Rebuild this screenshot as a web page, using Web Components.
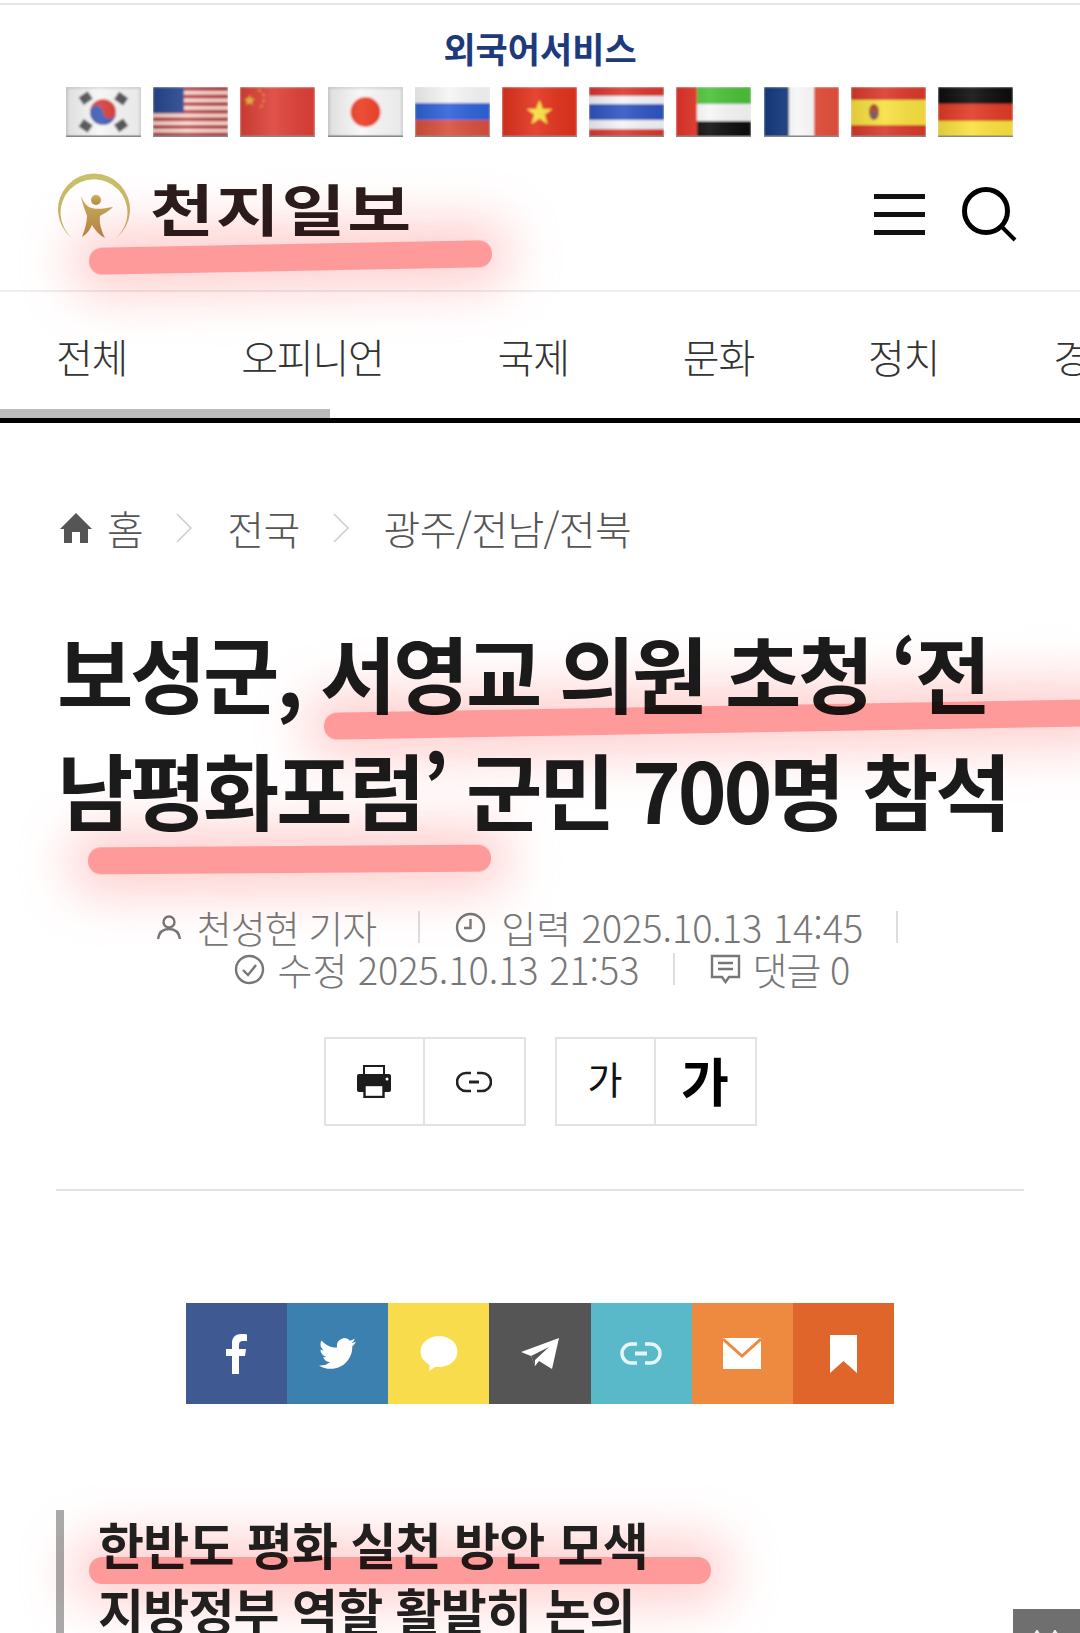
<!DOCTYPE html>
<html lang="ko">
<head>
<meta charset="utf-8">
<title>천지일보</title>
<style>
    html, body { margin: 0; padding: 0; background: #fff; }
    body { width: 1080px; height: 1633px; overflow: hidden; font-family: "Noto Sans CJK KR", "Noto Sans", sans-serif; }
</style>
</head>
<body>
<foreign-bar></foreign-bar>
<site-head></site-head>
<section-nav></section-nav>
<bread-crumbs></bread-crumbs>
<article-title></article-title>
<article-meta></article-meta>
<article-tools></article-tools>
<share-bar></share-bar>
<sub-head></sub-head>
<top-button></top-button>
<script>
const FLAGS = {
    kr: `<rect width="75" height="50" fill="#f6f6f6"/><rect x=".5" y=".5" width="74" height="49" fill="none" stroke="#ccc" stroke-width="2"/><circle cx="37" cy="25" r="13" fill="#d83a35"/><path d="M24 25a6.500 6.500 0 0 1 13 0a6.500 6.500 0 0 0 13 0a13 13 0 0 1-26 0z" fill="#3a5cb5"/><g fill="#555"><rect x="14" y="7" width="11" height="9" transform="rotate(-35 19 11)"/><rect x="50" y="7" width="11" height="9" transform="rotate(35 55 11)"/><rect x="14" y="34" width="11" height="9" transform="rotate(35 19 39)"/><rect x="50" y="34" width="11" height="9" transform="rotate(-35 55 39)"/></g>`,
    us: `<rect width="75" height="50" fill="#f8d8d2"/><g fill="#b8403c"><rect width="75" height="4"/><rect y="7.600" width="75" height="3.800"/><rect y="15.200" width="75" height="3.800"/><rect y="22.800" width="75" height="3.800"/><rect y="30.400" width="75" height="3.800"/><rect y="38" width="75" height="3.800"/><rect y="45.600" width="75" height="4.400"/></g><rect width="31" height="26" fill="#27478f"/>`,
    cn: `<rect width="75" height="50" fill="#dd4037"/><path d="M9.500 8l1.600 3.600 3.900.2-3 2.500 1 3.700-3.500-2.100-3.500 2.100 1-3.700-3-2.500 3.900-.2z" fill="#f2b83c"/><path d="M18 3c4 1 6 4 6 8s-1 7-4 10" fill="none" stroke="#e8943a" stroke-width="1.500" stroke-dasharray="3 3"/>`,
    jp: `<rect width="75" height="50" fill="#f7f7f7"/><rect x=".5" y=".5" width="74" height="49" fill="none" stroke="#ccc" stroke-width="2"/><circle cx="37.500" cy="25" r="15" fill="#ea3a22"/>`,
    ru: `<rect width="75" height="50" fill="#f5f5f5"/><rect y="16" width="75" height="17" fill="#2f62d8"/><rect y="33" width="75" height="17" fill="#d8503a"/>`,
    vn: `<rect width="75" height="50" fill="#e1301f"/><path d="M37.500 13l3.400 9h9.600l-7.700 5.800 2.900 9.400-8.200-5.700-8.200 5.700 2.900-9.400-7.700-5.800h9.600z" fill="#f6dc3c"/>`,
    th: `<rect width="75" height="50" fill="#d8392f"/><rect y="9" width="75" height="33" fill="#f3f3f8"/><rect y="17" width="75" height="16" fill="#2d55c0"/>`,
    ae: `<rect width="75" height="50" fill="#f6f6f6"/><rect x="21" width="54" height="17" fill="#4bbf38"/><rect x="21" y="34" width="54" height="16" fill="#111"/><rect width="21" height="50" fill="#e5342a"/>`,
    fr: `<rect width="75" height="50" fill="#f6f6f6"/><rect width="25" height="50" fill="#173a80"/><rect x="50" width="25" height="50" fill="#e3503a"/>`,
    es: `<rect width="75" height="50" fill="#d9382b"/><rect y="13" width="75" height="25" fill="#f7e03f"/><ellipse cx="23" cy="25" rx="5" ry="8" fill="#a8452f"/><rect x="20" y="25" width="6" height="6" fill="#6a5a60"/>`,
    de: `<rect width="75" height="17" fill="#0c0c0c"/><rect y="17" width="75" height="17" fill="#df3a25"/><rect y="34" width="75" height="16" fill="#f8e13c"/>`
};

class ForeignBar extends HTMLElement {
    constructor() {
        super();
        this.attachShadow({ mode: 'open' });
        const flags = Object.keys(FLAGS).map(k =>
            `<svg viewBox="0 0 75 50" width="75" height="50"><g filter="url(#soft)">${FLAGS[k]}</g><rect width="75" height="50" fill="url(#gloss)"/><rect y="48.500" width="75" height="1.500" fill="#888"/></svg>`
        ).join('');
        this.shadowRoot.innerHTML = `
        <style>
            :host { display: block; border-top: 2px solid #e6e9eb; margin-top: 3px; }
            h2 { margin: 0; padding-top: 20px; height: 62px; text-align: center; font: 700 35px/46px "Noto Sans CJK KR", sans-serif; color: #1c3a7c; }
            .flags { display: flex; justify-content: space-between; padding: 0 67px 0 66px; }
            svg { display: block; }
        </style>
        <svg width="0" height="0" style="position:absolute">
            <filter id="soft" x="-5%" y="-5%" width="110%" height="110%"><feGaussianBlur stdDeviation="0.9"/></filter>
            <linearGradient id="gloss" x1="0" y1="0" x2="1" y2="0"><stop offset="0" stop-color="#000" stop-opacity=".1"/><stop offset=".45" stop-color="#fff" stop-opacity=".1"/><stop offset="1" stop-color="#000" stop-opacity=".05"/></linearGradient>
        </svg>
        <h2>외국어서비스</h2>
        <div class="flags">${flags}</div>`;
    }
}

class SiteHead extends HTMLElement {
    constructor() {
        super();
        this.attachShadow({ mode: 'open' });
        this.shadowRoot.innerHTML = `
        <style>
            :host { display: block; position: relative; height: 155px; border-bottom: 2px solid #eee; box-sizing: border-box; }
            .row { display: flex; align-items: center; height: 140px; padding: 0 63px 0 57px; }
            .logo { display: flex; align-items: center; gap: 19px; }
            .name { display: inline-block; transform: scaleX(1.24); transform-origin: left center; font: 700 56px/70px "Noto Sans CJK KR", sans-serif; letter-spacing: 1.500px; color: #2c1c1c; }
            .icons { margin-left: auto; display: flex; align-items: center; gap: 36px; margin-top: 16px; }
            svg { display: block; }
            x-marker { left: 89px; top: 107px; width: 403px; }
        </style>
        <div class="row">
            <div class="logo">
                <svg width="74" height="70" viewBox="0 0 74 70">
                    <defs>
                        <linearGradient id="ring" x1="0" y1="0" x2="0" y2="1"><stop offset="0" stop-color="#c9c26a"/><stop offset="1" stop-color="#c4ab62"/></linearGradient>
                        <linearGradient id="man" x1="0" y1="0" x2="0" y2="1"><stop offset="0" stop-color="#c7b45a"/><stop offset="1" stop-color="#b58a4a"/></linearGradient>
                    </defs>
                    <path d="M15 66A36 36 0 1 1 59 66A33.500 33.500 0 1 0 15 66z" fill="url(#ring)"/>
                    <circle cx="39" cy="28" r="5" fill="url(#man)"/>
                    <path d="M24 24C27 31 30 35 35 36C41 38 49 36 56 35C51 40 46 42 43 44C42 50 44 58 48 66C42 63 38 58 35 53C33 58 30 62 25 65C28 57 30 50 30 44C28 38 25 31 24 24z" fill="url(#man)"/>
                </svg>
                <span class="name">천지일보</span>
            </div>
            <div class="icons">
                <svg width="51" height="42" viewBox="0 0 51 42" fill="#111"><rect width="51" height="5" y="0"/><rect width="51" height="5" y="18"/><rect width="51" height="5" y="36"/></svg>
                <svg width="56" height="56" viewBox="0 0 56 56" fill="none" stroke="#000"><circle cx="25" cy="24" r="21.500" stroke-width="5"/><path d="M41 40l13 13" stroke-width="4"/></svg>
            </div>
        </div>
        <x-marker tilt="-1.1"></x-marker>`;
    }
}

// the pink marker pen strokes over the screenshot
class XMarker extends HTMLElement {
    constructor() {
        super();
        this.attachShadow({ mode: 'open' });
        this.shadowRoot.innerHTML = `
        <style>
            :host { display: block; position: absolute; height: 27px; mix-blend-mode: multiply; pointer-events: none; z-index: 5; }
            div { width: 100%; height: 100%; border-radius: 13px; background: #ff9a9a; box-shadow: 0 0 50px 20px rgba(255, 150, 150, .45); }
        </style>
        <div></div>`;
    }
    connectedCallback() {
        this.style.transform = `rotate(${this.getAttribute('tilt') || 0}deg)`;
    }
}

class SectionNav extends HTMLElement {
    constructor() {
        super();
        this.attachShadow({ mode: 'open' });
        const items = ['전체', '오피니언', '국제', '문화', '정치', '경제'];
        this.shadowRoot.innerHTML = `
        <style>
            :host { display: block; position: relative; height: 126px; overflow: hidden; border-bottom: 5px solid #000; box-sizing: content-box; }
            ul { display: flex; gap: 114px; margin: 0; padding: 38px 0 0 56px; list-style: none; white-space: nowrap; font: 300 40px/52px "Noto Sans CJK KR", sans-serif; letter-spacing: -1.200px; color: #333; }
            .thumb { position: absolute; left: 0; bottom: 0; width: 330px; height: 9px; background: #bcbcbc; }
        </style>
        <ul>${items.map(i => `<li>${i}</li>`).join('')}</ul>
        <div class="thumb"></div>`;
    }
}

class BreadCrumbs extends HTMLElement {
    constructor() {
        super();
        this.attachShadow({ mode: 'open' });
        const chevron = `<svg width="16" height="30" viewBox="0 0 16 30" fill="none" stroke="#ccc" stroke-width="1.500"><path d="M1 1l14 14-14 14"/></svg>`;
        this.shadowRoot.innerHTML = `
        <style>
            :host { display: flex; align-items: center; height: 50px; margin-top: 80px; padding-left: 60px; font: 300 40px/50px "Noto Sans CJK KR", sans-serif; letter-spacing: -.6px; color: #555; }
            svg { display: block; flex: none; }
            .home { margin-right: 15px; }
            .c { margin: 0 35px 0 33px; }
        </style>
        <svg class="home" width="32" height="30" viewBox="0 0 32 30" fill="#555"><path d="M16 0L0 16h4v14h8V19h8v11h8V16h4z"/></svg>
        <span>홈</span><span class="c">${chevron}</span>
        <span>전국</span><span class="c">${chevron}</span>
        <span>광주/전남/전북</span>`;
    }
}

class ArticleTitle extends HTMLElement {
    constructor() {
        super();
        this.attachShadow({ mode: 'open' });
        this.shadowRoot.innerHTML = `
        <style>
            :host { display: block; position: relative; margin-top: 60px; padding-left: 57px; }
            h1 { margin: 0; font: 700 83px/117px "Noto Sans CJK KR", sans-serif; letter-spacing: -3.300px; color: #1b1b1b; white-space: nowrap; }
            .m1 { left: 324px; top: 93px; width: 780px; }
            .m2 { left: 88px; top: 233px; width: 403px; }
        </style>
        <h1>보성군, 서영교 의원 초청 ‘전<br>남평화포럼’ 군민 700명 참석</h1>
        <x-marker class="m1" tilt="-1"></x-marker>
        <x-marker class="m2" tilt="-.4"></x-marker>`;
    }
}

class ArticleMeta extends HTMLElement {
    constructor() {
        super();
        this.attachShadow({ mode: 'open' });
        const ic = 'fill="none" stroke="#777" stroke-width="2.400"';
        this.shadowRoot.innerHTML = `
        <style>
            :host { display: block; margin-top: 59px; font: 300 38px/42px "Noto Sans CJK KR", sans-serif; letter-spacing: -.1px; color: #777; }
            .row { display: flex; justify-content: center; align-items: center; height: 42px; }
            svg { display: block; flex: none; margin-right: 15px; }
            i { display: block; width: 2px; height: 32px; background: #ddd; margin: 0 35px 0 42px; }
            .row + .row { padding-left: 3px; }
            .row + .row i { margin-left: 33px; }
            .tail { margin-right: 26px; margin-left: 33px; }
            .tight { letter-spacing: -1px; }
            .cmt { margin-right: 12px; }
        </style>
        <div class="row">
            <svg width="26" height="26" viewBox="0 0 26 26" ${ic}><circle cx="13" cy="8" r="5.500"/><path d="M2 25c1-7 5-10 11-10s10 3 11 10"/></svg>
            <span class="tight">천성현 기자</span><i></i>
            <svg width="31" height="31" viewBox="0 0 31 31" ${ic}><circle cx="15.500" cy="15.500" r="13.500"/><path d="M15.500 7v9H9"/></svg>
            <span>입력 2025.10.13 14:45</span><i class="tail"></i>
        </div>
        <div class="row">
            <svg width="31" height="31" viewBox="0 0 31 31" ${ic} style="margin-right:13px"><circle cx="15.500" cy="15.500" r="13.500"/><path d="M9 16l5 5 8-10"/></svg>
            <span>수정 2025.10.13 21:53</span><i></i>
            <svg class="cmt" width="31" height="30" viewBox="0 0 31 30" ${ic}><path d="M2 2h27v21H19l-3.500 5-3.500-5H2z"/><path d="M8 9h15M8 15h15"/></svg>
            <span class="tight">댓글 0</span>
        </div>`;
    }
}

class ToolBox extends HTMLElement {
    constructor() {
        super();
        this.attachShadow({ mode: 'open' });
        this.shadowRoot.innerHTML = `
        <style>
            :host { display: flex; border: 2px solid #e2e2e2; height: 89px; box-sizing: border-box; }
            ::slotted(*) { display: flex; align-items: center; justify-content: center; width: 99px; box-sizing: border-box; }
            ::slotted(:first-child) { border-right: 2px solid #e2e2e2; }
        </style>
        <slot></slot>`;
    }
}

class ArticleTools extends HTMLElement {
    constructor() {
        super();
        this.attachShadow({ mode: 'open' });
        this.shadowRoot.innerHTML = `
        <style>
            :host { display: block; margin-top: 47px; }
            .wrap { display: flex; justify-content: center; gap: 29px; padding-bottom: 63px; }
            hr { margin: 0 56px; border: 0; height: 2px; background: #e3e3e3; }
            .s { font: 400 38px/1 "Noto Sans CJK KR", sans-serif; color: #111; padding-bottom: 8px; }
            .b { font: 700 52px/1 "Noto Sans CJK KR", sans-serif; color: #000; padding-bottom: 4px; }
        </style>
        <div class="wrap">
            <tool-box>
                <div><svg width="34" height="33" viewBox="0 0 34 33"><rect x="7" y="1" width="20" height="12" fill="#fff" stroke="#1c1c1c" stroke-width="2"/><rect y="9" width="34" height="18" rx="2" fill="#1c1c1c"/><rect x="7.500" y="20" width="19" height="12" fill="#fff" stroke="#1c1c1c" stroke-width="2.400"/><circle cx="30" cy="14" r="1.500" fill="#fff"/></svg></div>
                <div><svg width="36" height="22" viewBox="0 0 36 22" fill="none" stroke="#222" stroke-width="2.600"><path d="M15 2H10a9 9 0 0 0 0 18h5M21 2h5a9 9 0 0 1 0 18h-5"/><path d="M13 11h10" stroke-width="3"/></svg></div>
            </tool-box>
            <tool-box>
                <div class="s">가</div>
                <div class="b">가</div>
            </tool-box>
        </div>
        <hr>`;
    }
}

class ShareBar extends HTMLElement {
    constructor() {
        super();
        this.attachShadow({ mode: 'open' });
        this.shadowRoot.innerHTML = `
        <style>
            :host { display: flex; width: 708px; height: 101px; margin: 112px auto 0; }
            div { flex: 1; display: flex; align-items: center; justify-content: center; }
            svg { display: block; }
        </style>
        <div style="background:#3f5a93"><svg width="24" height="40" viewBox="0 0 24 40" fill="#fff"><path d="M7 40V22H1v-7h6V9c0-6 4-9 9-9 2 0 5 .200 6 .400V7h-4c-3 0-4 1.500-4 4v4h7l-1 7h-6v18z"/></svg></div>
        <div style="background:#3b80ae"><svg width="37" height="32" viewBox="0 0 24 21" preserveAspectRatio="none" fill="#fff"><path d="M23.950 2.500a10 10 0 0 1-2.820.770 4.960 4.960 0 0 0 2.160-2.720c-.950.560-2 .960-3.130 1.180a4.920 4.920 0 0 0-8.380 4.490C7.690 6.500 4.070 4.500 1.640 1.600a4.820 4.820 0 0 0-.670 2.470c0 1.710.870 3.210 2.190 4.100a4.900 4.900 0 0 1-2.230-.620v.060a4.920 4.920 0 0 0 3.950 4.830 5 5 0 0 1-2.210.080 4.940 4.940 0 0 0 4.600 3.420 9.870 9.870 0 0 1-6.100 2.100c-.390 0-.780-.020-1.170-.060a14 14 0 0 0 7.560 2.200c9.050 0 14-7.490 14-13.980 0-.210 0-.420-.020-.630A9.940 9.940 0 0 0 24 2.500z"/></svg></div>
        <div style="background:#f9dc4b"><svg width="38" height="36" viewBox="0 0 38 36"><ellipse cx="19" cy="15.500" rx="18.500" ry="15.500" fill="#fff"/><path d="M10 26l-1 9 9-6z" fill="#fff"/></svg></div>
        <div style="background:#555"><svg width="38" height="32" viewBox="0 0 38 32"><path d="M38 0L0 14l10 4 4 10 4-5 13 8z" fill="#fff"/><path d="M10 18L28 9 14 22v6z" fill="#555"/></svg></div>
        <div style="background:#5ab9c9"><svg width="42" height="23" viewBox="0 0 42 23" fill="none" stroke="#e6f6f8" stroke-width="3.400"><path d="M17 2h-5.500a9.500 9.500 0 0 0 0 19H17M25 2h5.500a9.500 9.500 0 0 1 0 19H25"/><path d="M15 11.500h12" stroke-width="4"/></svg></div>
        <div style="background:#ee8a3f"><svg width="38" height="31" viewBox="0 0 38 31"><rect width="38" height="31" fill="#fff"/><path d="M0 1l19 17L38 1" fill="none" stroke="#ee8a3f" stroke-width="3"/></svg></div>
        <div style="background:#e0652b"><svg width="27" height="38" viewBox="0 0 27 38" fill="#fff"><path d="M0 0h27v38L13.500 26 0 38z"/></svg></div>`;
    }
}

class SubHead extends HTMLElement {
    constructor() {
        super();
        this.attachShadow({ mode: 'open' });
        this.shadowRoot.innerHTML = `
        <style>
            :host { display: block; position: relative; margin: 107px 0 0 56px; padding-left: 34px; border-left: 8px solid #aaa; height: 140px; }
            p { margin: -1px 0 0; font: 700 50px/66px "Noto Sans CJK KR", sans-serif; letter-spacing: -.8px; color: #222; white-space: nowrap; }
            x-marker { left: 25px; top: 47px; width: 622px; }
        </style>
        <p>한반도 평화 실천 방안 모색<br>지방정부 역할 활발히 논의</p>
        <x-marker></x-marker>`;
    }
}

class TopButton extends HTMLElement {
    constructor() {
        super();
        this.attachShadow({ mode: 'open' });
        this.shadowRoot.innerHTML = `
        <style>
            :host { display: block; position: fixed; right: 0; bottom: 0; width: 67px; height: 24px; background: #6f6f6f; }
            svg { display: block; margin: 21px 0 0 21px; }
        </style>
        <svg width="24" height="3" viewBox="0 0 24 3" fill="none" stroke="#eee" stroke-width="2"><path d="M1 4l2-3 2 3M19 4l2-3 2 3"/></svg>`;
    }
}

customElements.define('x-marker', XMarker);
customElements.define('tool-box', ToolBox);
customElements.define('foreign-bar', ForeignBar);
customElements.define('site-head', SiteHead);
customElements.define('section-nav', SectionNav);
customElements.define('bread-crumbs', BreadCrumbs);
customElements.define('article-title', ArticleTitle);
customElements.define('article-meta', ArticleMeta);
customElements.define('article-tools', ArticleTools);
customElements.define('share-bar', ShareBar);
customElements.define('sub-head', SubHead);
customElements.define('top-button', TopButton);
</script>
</body>
</html>
